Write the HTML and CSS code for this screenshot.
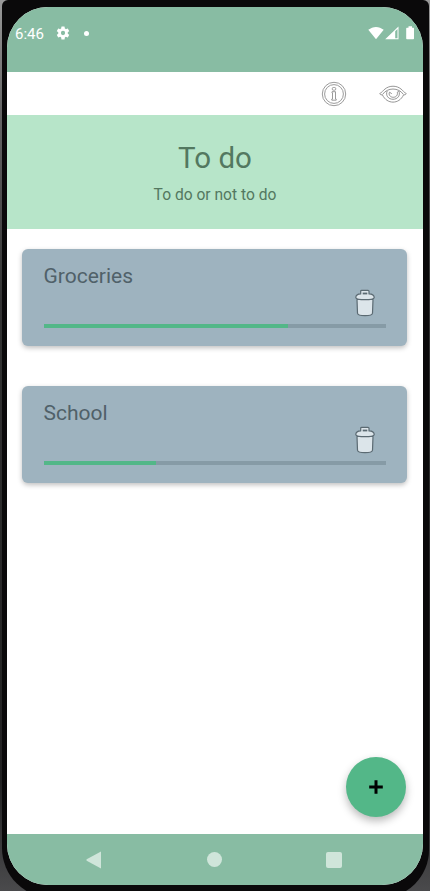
FILE: index.html
```html
<!DOCTYPE html>
<html lang="en">
<head>
<meta charset="utf-8">
<title>To do</title>
<link rel="stylesheet" href="styles.css">
</head>
<body>
<div class="phone">
  <div class="screen">
    <header class="status">
      <span class="time">6:46</span>
      <svg class="gear" width="16" height="16" viewBox="0 0 24 24"><path fill="#fff" d="M19.14 12.94c.04-.3.06-.61.06-.94s-.02-.64-.07-.94l2.03-1.58a.49.49 0 0 0 .12-.61l-1.92-3.32a.49.49 0 0 0-.59-.22l-2.39.96a7 7 0 0 0-1.62-.94l-.36-2.54a.48.48 0 0 0-.48-.41h-3.84a.47.47 0 0 0-.47.41l-.36 2.54c-.59.24-1.13.57-1.62.94l-2.39-.96a.48.48 0 0 0-.59.22L2.74 8.87a.47.47 0 0 0 .12.61l2.03 1.58a6 6 0 0 0 0 1.88l-2.03 1.58a.49.49 0 0 0-.12.61l1.92 3.32c.12.22.37.29.59.22l2.39-.96c.5.38 1.03.7 1.62.94l.36 2.54c.05.24.24.41.48.41h3.84c.24 0 .44-.17.47-.41l.36-2.54a7 7 0 0 0 1.62-.94l2.39.96c.22.08.47 0 .59-.22l1.92-3.32a.47.47 0 0 0-.12-.61zM12 15.200a3.200 3.200 0 1 1 0-6.400 3.200 3.200 0 0 1 0 6.400z"/></svg>
      <span class="dot"></span>
      <svg class="signals" width="48" height="16" viewBox="0 0 48 16">
        <path fill="#fff" d="M.3 4.800C5 .900 11 .900 15.700 4.800L8 14.200z"/>
        <path fill="#fff" fill-rule="evenodd" d="M30.500 1.500V14.300H17.200zM27.200 6.300V13.200H29.500V4z"/>
        <path fill="#fff" d="M40.500 1.200h3.500v1.500h1.300q.7 0 .7.700v10.200q0 .7-.7.700h-6.300q-.8 0-.8-.7V3.400q0-.7.700-.7h1.600z"/>
      </svg>
    </header>
    <nav class="toolbar">
      <svg width="26" height="26" viewBox="0 0 26 26" fill="none" stroke="#909090" stroke-width=".9">
        <circle cx="13" cy="13" r="11.700"/><circle cx="13" cy="13" r="9.400"/>
        <rect x="11.300" y="6.500" width="3.400" height="2.700" rx="1"/>
        <path d="M11 10.700h3.500v7.300h.7v1.200h-4.400V18h.7v-6H11z"/>
      </svg>
      <svg width="28" height="20" viewBox="0 0 28 20" fill="none" stroke="#8a8a8a" stroke-width=".9" stroke-linejoin="round">
        <path d="M.7 9.600C3 8.500 4 6.500 6 5C10.500 1.300 17.500 1.300 22 5C24 6.500 25 8.500 27.300 9.600Q26.800 11 24.500 11C20 20.500 8 20.500 3.500 11Q1.200 11 .7 9.600z"/>
        <path d="M3.500 10.500C8.500 3.200 19.500 3.200 24.500 10.500"/>
        <path d="M8.200 7C6.200 11.500 9.500 15.300 14 15.300S21.800 11.500 19.800 7L18.300 8.200C19 11.300 17 13.300 14.200 13.300S9.300 10.800 10.500 8.200L12.800 9.700"/>
      </svg>
    </nav>
    <section class="hero">
      <h1>To do</h1>
      <p>To do or not to do</p>
    </section>
    <main class="lists">
      <article class="card">
        <h2>Groceries</h2>
        <svg class="trash" width="20" height="28" viewBox="0 0 20 28" fill="#dce5ea" stroke="#5b6a72" stroke-width="1.200" stroke-linejoin="round">
          <path d="M2 10.500L2.500 24.200Q2.700 26.600 10 26.600T17.500 24.200L18 10.500z"/>
          <path d="M.8 8.700C.800 6.300 3.200 5 5.700 4.900V2.200Q5.700 1.300 6.700 1.300H13Q14 1.300 14 2.200V4.900C16.500 5 19.200 6.300 19.200 8.700Q18.500 10.600 10 10.600T.8 8.700z"/>
          <path d="M7.700 4.500h4.600" stroke-width="1.800"/>
        </svg>
        <div class="track"><div class="fill" style="width:71.500%"></div></div>
      </article>
      <article class="card">
        <h2>School</h2>
        <svg class="trash" width="20" height="28" viewBox="0 0 20 28" fill="#dce5ea" stroke="#5b6a72" stroke-width="1.200" stroke-linejoin="round">
          <path d="M2 10.500L2.500 24.200Q2.700 26.600 10 26.600T17.500 24.200L18 10.500z"/>
          <path d="M.8 8.700C.800 6.300 3.200 5 5.700 4.900V2.200Q5.700 1.300 6.700 1.300H13Q14 1.300 14 2.200V4.900C16.500 5 19.200 6.300 19.200 8.700Q18.500 10.600 10 10.600T.8 8.700z"/>
          <path d="M7.700 4.500h4.600" stroke-width="1.800"/>
        </svg>
        <div class="track"><div class="fill" style="width:33%"></div></div>
      </article>
    </main>
    <button class="fab" aria-label="Add list">
      <svg width="16" height="16" viewBox="0 0 16 16"><path d="M8 1.200V14.800M1.200 8H14.800" stroke="#000" stroke-width="3"/></svg>
    </button>
    <footer class="navbar">
      <svg width="16" height="18" viewBox="0 0 16 18"><path fill="#cfe5da" d="M15 .600V17.400L.700 9.700Q0 9 .700 8.300z"/></svg>
      <span class="home"></span>
      <span class="recent"></span>
    </footer>
  </div>
</div>
</body>
</html>
```

FILE: styles.css
```css
* { box-sizing: border-box; }

html { background: #333; }

body {
  margin: 0;
  height: 891px;
  background: linear-gradient(#999 0, #666 110px, #333 300px, #222 780px, #4a4a4c);
  font-family: Roboto, sans-serif;
  overflow: hidden;
}

.phone {
  height: 898px;
  padding: 7px 6px 13px 5px;
  margin: 0 1px 0 2px;
  background: #0a090a;
  border-radius: 6px 6px 48px 50px;
}

.screen {
  position: relative;
  display: flex;
  flex-direction: column;
  height: 878px;
  width: 416px;
  border-radius: 41px;
  overflow: hidden;
  background: #fff;
}

.status {
  display: flex;
  align-items: center;
  flex: 0 0 65px;
  padding: 0 8px 12px;
  background: #88bca3;
  color: #fff;
}

.time {
  width: 40px;
  font-size: 15px;
  line-height: 18px;
}

.gear { margin-top: -1px; }

.dot {
  width: 5px;
  height: 5px;
  margin: -1px 0 0 13px;
  border-radius: 50%;
  background: #fff;
}

.signals { margin: -1px -1px 0 auto; }

.toolbar {
  display: flex;
  align-items: center;
  justify-content: flex-end;
  gap: 32px;
  flex: 0 0 43px;
  padding-right: 16px;
}

.hero {
  flex: 0 0 114px;
  padding-top: 25px;
  background: #b7e5c9;
  color: #537860;
  text-align: center;
}

.hero h1 {
  margin: 0;
  font-size: 29.5px;
  font-weight: 400;
  line-height: 36px;
}

.hero p {
  margin: 8px 0 0;
  font-size: 15.6px;
  line-height: 22px;
}

.lists {
  display: flex;
  flex-direction: column;
  flex: 1;
  gap: 40px;
  padding: 20px 16px 0 15px;
}

.card {
  display: flex;
  flex-direction: column;
  height: 97px;
  padding: 14px 21.5px 0;
  border-radius: 6px;
  background: #9eb3bf;
  box-shadow: 0 2px 5px rgba(0, 0, 0, .25);
}

.card h2 {
  margin: 0;
  color: #506169;
  font-size: 21px;
  font-weight: 400;
  line-height: 26px;
}

.trash {
  align-self: flex-end;
  margin: 0 11px 0 0;
}

.track {
  height: 4px;
  margin-top: 7px;
  background: #869ba6;
}

.fill {
  height: 100%;
  background: #53b788;
}

.fab {
  position: absolute;
  right: 17px;
  bottom: 68px;
  display: grid;
  place-items: center;
  width: 60px;
  height: 60px;
  padding: 0;
  border: 0;
  border-radius: 50%;
  background: #53b788;
  box-shadow: 0 4px 8px rgba(0, 0, 0, .28);
}

.navbar {
  display: flex;
  align-items: center;
  justify-content: space-between;
  flex: 0 0 51px;
  padding: 0 81px 0 79px;
  background: #88bca3;
}

.home {
  width: 15px;
  height: 15px;
  border-radius: 50%;
  background: #cfe5da;
}

.recent {
  width: 16px;
  height: 16px;
  border-radius: 2px;
  background: #cfe5da;
}
```
